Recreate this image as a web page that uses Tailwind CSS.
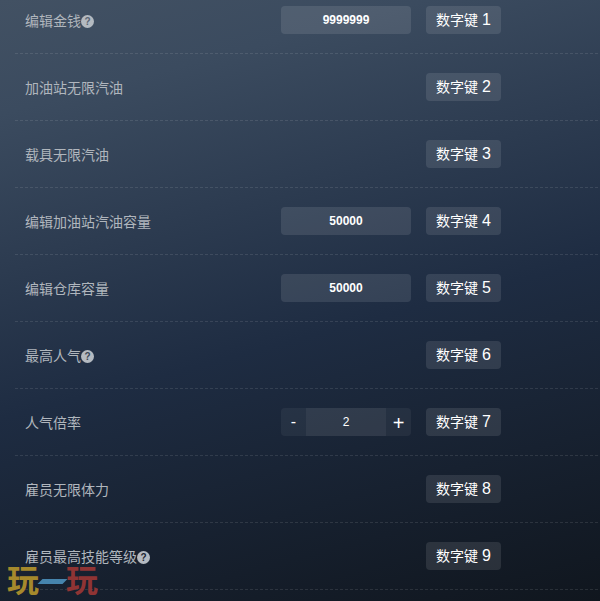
<!DOCTYPE html>
<html lang="zh-CN">
<head>
  <meta charset="UTF-8">
  <title>修改器</title>
  <script src="https://cdn.jsdelivr.net/npm/@tailwindcss/browser@4"></script>
</head>
<body class="w-[600px] h-[601px] overflow-hidden relative bg-[linear-gradient(165deg,#425163_0%,#3b4b5f_15%,#1e2c42_55%,#10161e_100%)] font-['Liberation_Sans','Noto_Sans_CJK_SC',sans-serif]">
  <div class="-mt-[13px] pl-[15px]">

    <div class="h-[67px] pb-[1px] flex items-center pl-[10px] bg-[linear-gradient(90deg,rgb(255_255_255/0.1)_3px,transparent_3px)] bg-[length:5px_1px] bg-bottom bg-repeat-x">
      <span class="pt-[2px] text-[14px] text-[#b0b6bd] flex items-center">编辑金钱<span class="w-[13px] h-[13px] rounded-full bg-[#b4bac1] text-[#5a6472] text-[10px] font-bold flex items-center justify-center">?</span></span>
      <div class="ml-auto flex items-center gap-[15px] mr-[99px]">
        <div class="w-[130px] h-[28px] rounded-[4px] bg-white/10 text-white text-[12px] font-bold flex items-center justify-center">9999999</div>
        <div class="w-[75px] h-[28px] rounded-[4px] bg-white/10 text-white text-[14px] flex items-center justify-center whitespace-pre">数字键 <span class="text-[16px] leading-none">1</span></div>
      </div>
    </div>

    <div class="h-[67px] pb-[1px] flex items-center pl-[10px] bg-[linear-gradient(90deg,rgb(255_255_255/0.1)_3px,transparent_3px)] bg-[length:5px_1px] bg-bottom bg-repeat-x">
      <span class="pt-[2px] text-[14px] text-[#b0b6bd]">加油站无限汽油</span>
      <div class="ml-auto flex items-center gap-[15px] mr-[99px]">
        <div class="w-[75px] h-[28px] rounded-[4px] bg-white/10 text-white text-[14px] flex items-center justify-center whitespace-pre">数字键 <span class="text-[16px] leading-none">2</span></div>
      </div>
    </div>

    <div class="h-[67px] pb-[1px] flex items-center pl-[10px] bg-[linear-gradient(90deg,rgb(255_255_255/0.1)_3px,transparent_3px)] bg-[length:5px_1px] bg-bottom bg-repeat-x">
      <span class="pt-[2px] text-[14px] text-[#b0b6bd]">载具无限汽油</span>
      <div class="ml-auto flex items-center gap-[15px] mr-[99px]">
        <div class="w-[75px] h-[28px] rounded-[4px] bg-white/10 text-white text-[14px] flex items-center justify-center whitespace-pre">数字键 <span class="text-[16px] leading-none">3</span></div>
      </div>
    </div>

    <div class="h-[67px] pb-[1px] flex items-center pl-[10px] bg-[linear-gradient(90deg,rgb(255_255_255/0.1)_3px,transparent_3px)] bg-[length:5px_1px] bg-bottom bg-repeat-x">
      <span class="pt-[2px] text-[14px] text-[#b0b6bd]">编辑加油站汽油容量</span>
      <div class="ml-auto flex items-center gap-[15px] mr-[99px]">
        <div class="w-[130px] h-[28px] rounded-[4px] bg-white/10 text-white text-[12px] font-bold flex items-center justify-center">50000</div>
        <div class="w-[75px] h-[28px] rounded-[4px] bg-white/10 text-white text-[14px] flex items-center justify-center whitespace-pre">数字键 <span class="text-[16px] leading-none">4</span></div>
      </div>
    </div>

    <div class="h-[67px] pb-[1px] flex items-center pl-[10px] bg-[linear-gradient(90deg,rgb(255_255_255/0.1)_3px,transparent_3px)] bg-[length:5px_1px] bg-bottom bg-repeat-x">
      <span class="pt-[2px] text-[14px] text-[#b0b6bd]">编辑仓库容量</span>
      <div class="ml-auto flex items-center gap-[15px] mr-[99px]">
        <div class="w-[130px] h-[28px] rounded-[4px] bg-white/10 text-white text-[12px] font-bold flex items-center justify-center">50000</div>
        <div class="w-[75px] h-[28px] rounded-[4px] bg-white/10 text-white text-[14px] flex items-center justify-center whitespace-pre">数字键 <span class="text-[16px] leading-none">5</span></div>
      </div>
    </div>

    <div class="h-[67px] pb-[1px] flex items-center pl-[10px] bg-[linear-gradient(90deg,rgb(255_255_255/0.1)_3px,transparent_3px)] bg-[length:5px_1px] bg-bottom bg-repeat-x">
      <span class="pt-[2px] text-[14px] text-[#b0b6bd] flex items-center">最高人气<span class="w-[13px] h-[13px] rounded-full bg-[#b4bac1] text-[#3a4656] text-[10px] font-bold flex items-center justify-center">?</span></span>
      <div class="ml-auto flex items-center gap-[15px] mr-[99px]">
        <div class="w-[75px] h-[28px] rounded-[4px] bg-white/10 text-white text-[14px] flex items-center justify-center whitespace-pre">数字键 <span class="text-[16px] leading-none">6</span></div>
      </div>
    </div>

    <div class="h-[67px] pb-[1px] flex items-center pl-[10px] bg-[linear-gradient(90deg,rgb(255_255_255/0.1)_3px,transparent_3px)] bg-[length:5px_1px] bg-bottom bg-repeat-x">
      <span class="pt-[2px] text-[14px] text-[#b0b6bd]">人气倍率</span>
      <div class="ml-auto flex items-center gap-[15px] mr-[99px]">
        <div class="w-[130px] h-[28px] rounded-[4px] bg-white/5 text-white flex items-center overflow-hidden">
          <span class="w-[25px] text-center text-[16px]">-</span>
          <span class="w-[80px] h-full bg-white/5 text-[12px] flex items-center justify-center">2</span>
          <span class="w-[25px] pt-[1px] text-center text-[20px] leading-none">+</span>
        </div>
        <div class="w-[75px] h-[28px] rounded-[4px] bg-white/10 text-white text-[14px] flex items-center justify-center whitespace-pre">数字键 <span class="text-[16px] leading-none">7</span></div>
      </div>
    </div>

    <div class="h-[67px] pb-[1px] flex items-center pl-[10px] bg-[linear-gradient(90deg,rgb(255_255_255/0.1)_3px,transparent_3px)] bg-[length:5px_1px] bg-bottom bg-repeat-x">
      <span class="pt-[2px] text-[14px] text-[#b0b6bd]">雇员无限体力</span>
      <div class="ml-auto flex items-center gap-[15px] mr-[99px]">
        <div class="w-[75px] h-[28px] rounded-[4px] bg-white/10 text-white text-[14px] flex items-center justify-center whitespace-pre">数字键 <span class="text-[16px] leading-none">8</span></div>
      </div>
    </div>

    <div class="h-[67px] pb-[1px] flex items-center pl-[10px] bg-[linear-gradient(90deg,rgb(255_255_255/0.1)_3px,transparent_3px)] bg-[length:5px_1px] bg-bottom bg-repeat-x">
      <span class="pt-[2px] text-[14px] text-[#b0b6bd] flex items-center">雇员最高技能等级<span class="w-[13px] h-[13px] rounded-full bg-[#b4bac1] text-[#1c2530] text-[10px] font-bold flex items-center justify-center">?</span></span>
      <div class="ml-auto flex items-center gap-[15px] mr-[99px]">
        <div class="w-[75px] h-[28px] rounded-[4px] bg-white/10 text-white text-[14px] flex items-center justify-center whitespace-pre">数字键 <span class="text-[16px] leading-none">9</span></div>
      </div>
    </div>

  </div>

  <!-- watermark -->
  <div class="absolute left-[7px] top-[565px] flex items-center h-[32px] text-[32px] leading-none font-bold">
    <span class="text-[#a5892c]">玩</span>
    <span class="w-[25px] h-[5px] -skew-x-[45deg] bg-[#4684ad] mx-[1px]"></span>
    <span class="text-[#8f3434]">玩</span>
  </div>
</body>
</html>
